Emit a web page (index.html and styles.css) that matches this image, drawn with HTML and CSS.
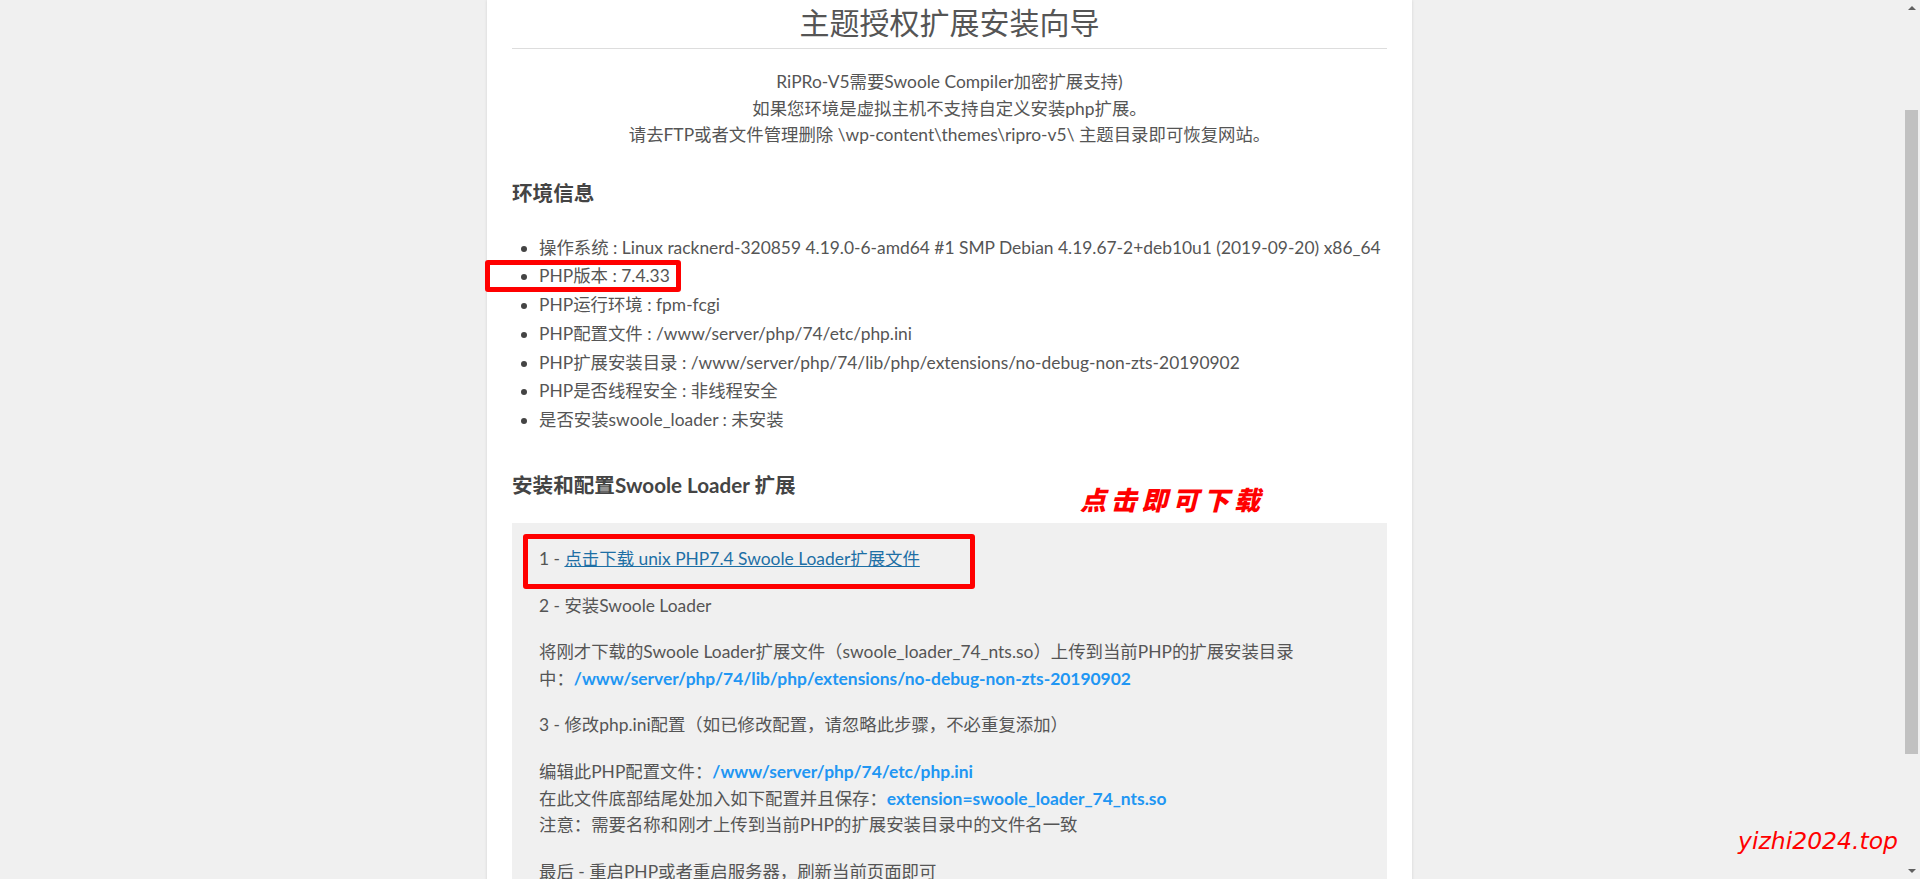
FILE: index.html
```html
<!DOCTYPE html>
<html lang="zh-CN">
<head>
<meta charset="utf-8">
<title>主题授权扩展安装向导</title>
<link rel="stylesheet" href="styles.css">
</head>
<body>
<div class="screen">
  <main class="main">
    <div class="panel">
      <h1 class="title">主题授权扩展安装向导</h1>
      <p class="intro">RiPRo-V5需要Swoole Compiler加密扩展支持)<br>如果您环境是虚拟主机不支持自定义安装php扩展。<br>请去FTP或者文件管理删除 \wp-content\themes\ripro-v5\ 主题目录即可恢复网站。</p>

      <h3 class="section-title">环境信息</h3>
      <ul class="env-list">
        <li>操作系统 : Linux racknerd-320859 4.19.0-6-amd64 #1 SMP Debian 4.19.67-2+deb10u1 (2019-09-20) x86_64</li>
        <li class="marked">PHP版本 : 7.4.33</li>
        <li>PHP运行环境 : fpm-fcgi</li>
        <li>PHP配置文件 : /www/server/php/74/etc/php.ini</li>
        <li>PHP扩展安装目录 : /www/server/php/74/lib/php/extensions/no-debug-non-zts-20190902</li>
        <li>PHP是否线程安全 : 非线程安全</li>
        <li>是否安装swoole_loader : 未安装</li>
      </ul>

      <h3 class="section-title section-install">安装和配置Swoole Loader 扩展<span class="note">点击即可下载</span></h3>
      <div class="steps">
        <p class="step marked-step">1 - <a class="dl-link" href="#">点击下载 unix PHP7.4 Swoole Loader扩展文件</a></p>
        <p class="step">2 - 安装Swoole Loader</p>
        <p class="step">将刚才下载的Swoole Loader扩展文件（swoole_loader_74_nts.so）上传到当前PHP的扩展安装目录<br>中：<b class="path">/www/server/php/74/lib/php/extensions/no-debug-non-zts-20190902</b></p>
        <p class="step">3 - 修改php.ini配置（如已修改配置，请忽略此步骤，不必重复添加）</p>
        <p class="step">编辑此PHP配置文件：<b class="path">/www/server/php/74/etc/php.ini</b><br>在此文件底部结尾处加入如下配置并且保存：<b class="path">extension=swoole_loader_74_nts.so</b><br>注意：需要名称和刚才上传到当前PHP的扩展安装目录中的文件名一致</p>
        <p class="step">最后 - 重启PHP或者重启服务器，刷新当前页面即可</p>
      </div>
    </div>
    <div class="watermark">yizhi2024.top</div>
  </main>
  <div class="scrollbar">
    <span class="arrow arrow-up"></span>
    <div class="track"><div class="thumb"></div></div>
    <span class="arrow arrow-down"></span>
  </div>
</div>
</body>
</html>
```

FILE: styles.css
```css
html, body {
  margin: 0;
  padding: 0;
  height: 100%;
  overflow: hidden;
}
body {
  background: #f0f0f0;
  font-family: Lato, "Noto Sans CJK SC", sans-serif;
  color: #555;
  font-size: 17.4px;
}
.screen {
  display: flex;
  height: 879px;
  overflow: hidden;
}
.main {
  flex: 1;
  position: relative;
  padding-right: 4px;
  overflow: hidden;
}
.panel {
  width: 925px;
  margin: 0 auto;
  box-sizing: border-box;
  background: #fff;
  padding: 0 25px 40px;
  min-height: 1100px;
  box-shadow: 0 0 3px rgba(0, 0, 0, 0.12);
}
.title {
  margin: 0;
  padding: 2px 0 6px;
  line-height: 40px;
  font-size: 30px;
  font-weight: normal;
  text-align: center;
  color: #555;
  border-bottom: 1px solid #ddd;
}
.intro {
  margin: 20px 0 0;
  text-align: center;
  line-height: 26.5px;
}
.section-title {
  margin: 31px 0 0;
  font-size: 20.6px;
  line-height: 26px;
  font-weight: bold;
  color: #444;
}
.section-install {
  position: relative;
  margin-top: 37px;
}
.env-list {
  margin: 28px 0 0;
  padding-left: 27px;
  line-height: 28.8px;
}
.env-list li {
  white-space: nowrap;
}
.env-list li::marker {
  color: #444;
}
.marked {
  position: relative;
}
.marked::after {
  content: "";
  position: absolute;
  left: -54px;
  top: -2px;
  width: 196px;
  height: 32px;
  border: 5px solid #f00;
  border-radius: 3px;
  box-sizing: border-box;
}
.note {
  position: absolute;
  left: 568px;
  top: 12px;
  font-family: "Noto Sans CJK SC", sans-serif;
  font-size: 26px;
  line-height: 30px;
  font-style: italic;
  font-weight: 900;
  letter-spacing: 4.8px;
  color: #f00;
}
.steps {
  margin-top: 25px;
  background: #f0f0f0;
  padding: 23px 27px 30px;
}
.step {
  margin: 0 0 20px;
  line-height: 26.6px;
}
.marked-step {
  position: relative;
}
.marked-step::after {
  content: "";
  position: absolute;
  left: -16px;
  top: -12px;
  width: 452px;
  height: 55px;
  border: 5px solid #f00;
  border-radius: 3px;
  box-sizing: border-box;
}
.dl-link {
  color: #1d6fa5;
  text-decoration: underline;
}
.path {
  color: #2196f3;
  font-weight: bold;
}
.watermark {
  position: absolute;
  left: 1738px;
  top: 823px;
  font-family: "DejaVu Sans", sans-serif;
  font-style: italic;
  font-size: 23.5px;
  line-height: 36px;
  color: #f00;
}
.scrollbar {
  width: 17px;
  flex: none;
  background: #f0f0f0;
  display: flex;
  flex-direction: column;
  align-items: center;
}
.arrow {
  width: 0;
  height: 0;
  border-left: 4px solid transparent;
  border-right: 4px solid transparent;
  flex: none;
}
.arrow-up {
  margin-top: 6px;
  border-bottom: 4px solid #606060;
}
.arrow-down {
  margin-bottom: 6px;
  border-top: 4px solid #606060;
}
.track {
  flex: 1;
  width: 100%;
  padding-top: 100px;
  box-sizing: border-box;
}
.thumb {
  margin: 0 auto;
  width: 13px;
  height: 644px;
  background: #c1c1c1;
}
```
